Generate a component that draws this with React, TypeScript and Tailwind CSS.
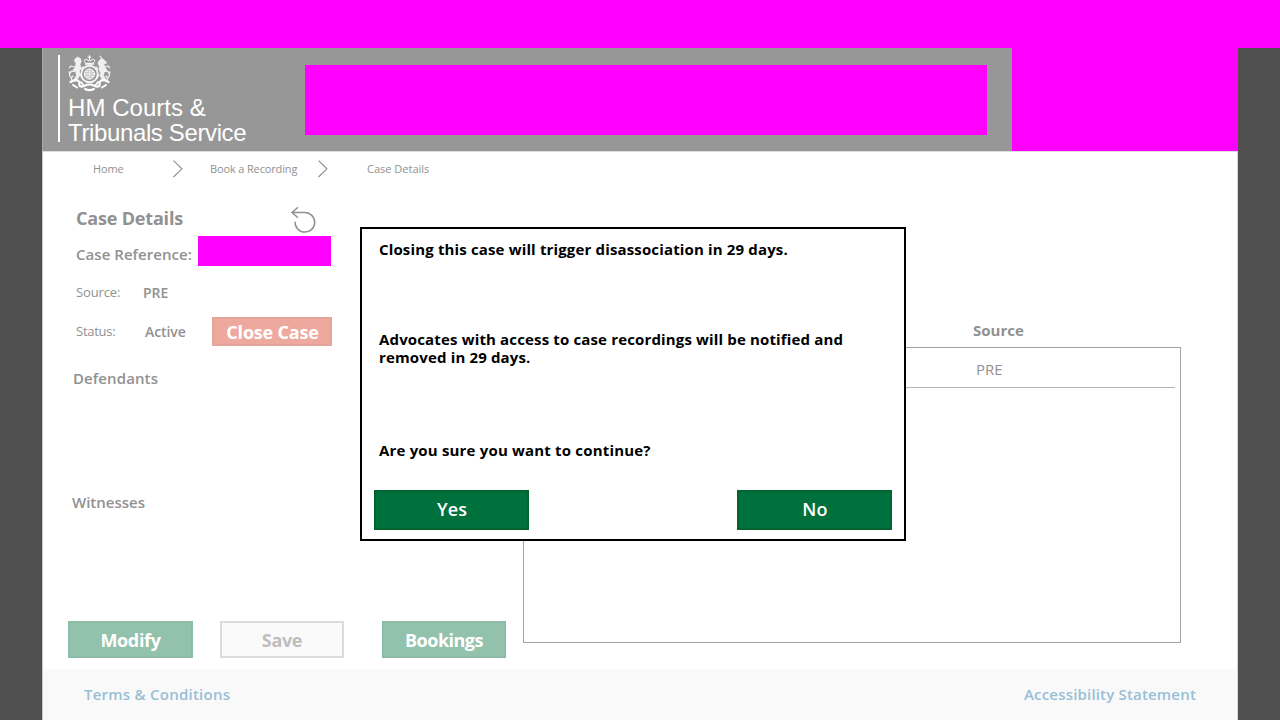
import type { ReactNode } from "react";

function Crest() {
  return (
    <svg width="44" height="38" viewBox="0 0 44 38" fill="none" stroke="white" strokeLinecap="round" strokeLinejoin="round">
      <path d="M17.500 8c-2-2-1.500-4 1-3.500l3 1.500 3-1.500c2.500-.5 3 1.500 1 3.500zM21.500 4.500V.6M20 2.200h3" strokeWidth="1" />
      <path d="M17.500 9h8" strokeWidth="1.400" />
      <circle cx="21.500" cy="19" r="8.300" strokeWidth="1.900" strokeOpacity=".9" />
      <circle cx="21.500" cy="19" r="5.200" strokeWidth="0.800" fill="white" fillOpacity="0.5" />
      <path d="M21.500 14v10M16.500 19h10M18 16.500h2M23.500 16.500h2M18 21.500h2M23.500 21.500h2" strokeWidth="0.800" strokeOpacity=".8" />
      <path d="M7 4l2.500-2 3 1.500.8 3-1.300 3 1 3-1.500 4 .5 3.500-2 3.500-4 3 .5-3 2-3-1-4-2.500-1.500 2-2.500L8 8.500 6.500 6z" fill="white" fillOpacity=".85" strokeWidth=".7" strokeOpacity=".7" />
      <path d="M6.500 12L3 11 1.500 12.500M6.500 16l-3.500.5-1.500 1.500M5 21l-2 2 1 2M3 22.500c-3-2-1-5 .5-6M2 19l-1-2M13 14l2-2M12 20l2 2" strokeWidth="1.300" strokeOpacity=".85" />
      <path d="M36 5L31.500.8 33.500 4 31 5.500l-1 3 1.500 3-.5 3 1.500 3.500-.5 3 2 3 4 2.500-.5-3-2-3 1-4 2.500-1.500-2-2.500-1.500-4 2 .5 1-1.500z" fill="white" fillOpacity=".85" strokeWidth=".7" strokeOpacity=".7" />
      <path d="M36.500 12l3.500-1 1.500 1.500M36.500 16l3.500.5 1.500 1.500M38 21l2 2-1 2M40 22.500c3-2 1-5-.5-6M41 19l1-2M30 14l-2-2M31 20l-2 2" strokeWidth="1.300" strokeOpacity=".85" />
      <path d="M2.500 27c3-2 6-2.500 8-1 2.500 2-1 5 2.500 5.500 3 .5 4-2 8.500-2s5.500 2.500 8.500 2c3.500-.5 0-3.500 2.500-5.500 2-1.500 5-1 8 1" strokeWidth="2.200" />
      <path d="M5 30l4 2.500M38 30l-4 2.500M13 27l2 2.500M30 27l-2 2.500M17 34c3 1.500 6 1.500 9 0" strokeWidth="2" />
    </svg>
  );
}

function Chevron() {
  return (
    <svg className="-mt-[2px]" width="12" height="18" viewBox="0 0 12 18" fill="none" stroke="#8c8c8c" strokeWidth="1.100">
      <path d="M1.500 0.700L9.900 8.800L1.500 17" />
    </svg>
  );
}

function UndoIcon() {
  return (
    <svg className="mt-[3px]" width="28" height="28" viewBox="0 0 28 28" fill="none" stroke="#8f8f8f" strokeWidth="1.500">
      <path d="M2 6.500H14.800A9.800 9.800 0 1 1 5.100 15.800M8 1.200L2 6.500L8 11.700" />
    </svg>
  );
}

function DialogButton({ children }: { children: ReactNode }) {
  return (
    <button className="flex h-10 w-[155px] items-center justify-center border-2 border-[#00652f] bg-[#00703c] pb-[2px] pl-px text-[18px] font-semibold text-white">
      {children}
    </button>
  );
}

export default function App() {
  return (
    <div className="relative flex h-[720px] w-[1280px] flex-col overflow-hidden bg-[#505050] font-['Open_Sans',sans-serif] text-[#919191]">
      <div className="h-12 shrink-0 bg-[#ff00ff]" />
      <div className="mx-[42px] flex flex-1 flex-col bg-white">
        <header className="flex h-[103px] bg-[#979797]">
          <div className="flex w-[263px] border-l border-[#a9a9a9] pl-[15px] pt-[7px]">
            <div className="h-[87px] w-[2px] bg-white" />
            <div className="pl-[8px] font-['Liberation_Sans',sans-serif] text-[24px] leading-[25px] text-white">
              <Crest />
              <div className="mt-[2px] whitespace-nowrap tracking-[0.05px]">HM Courts &amp;</div>
              <div className="whitespace-nowrap tracking-[-0.37px]">Tribunals Service</div>
            </div>
          </div>
          <div className="mt-[17px] h-[70px] w-[682px] bg-[#ff00ff]" />
          <div className="ml-auto h-full w-[226px] bg-[#ff00ff]" />
        </header>

        <div className="flex flex-1 flex-col border-x border-l-[#c9c9c9] border-r-[#d6d6d6]">
          <nav className="flex h-9 items-center border-t border-[#dedede] pl-[50px] text-[11px] font-medium">
            <span className="w-[79px] tracking-[-0.1px]">Home</span>
            <Chevron />
            <span className="ml-[26px] w-[107px] whitespace-nowrap tracking-[-0.14px]">Book a Recording</span>
            <Chevron />
            <span className="ml-[38px]">Case Details</span>
          </nav>

          <div className="flex h-[482px]">
            <section className="flex w-[480px] flex-col">
              <div className="mt-[13px] flex h-9 items-center pl-[33px]">
                <h1 className="w-[214px] text-[18px] font-bold tracking-[-0.18px]">Case Details</h1>
                <UndoIcon />
              </div>
              <div className="flex h-[30px] pl-[33px]">
                <span className="w-[122px] pt-[7px] text-[15px] font-semibold leading-[22px] tracking-[0.05px] whitespace-nowrap">Case Reference:</span>
                <span className="h-full w-[133px] bg-[#ff00ff]" />
              </div>
              <div className="mt-[13px] flex h-7 items-center pl-[33px]">
                <span className="w-[67px] text-[13px] tracking-[-0.12px]">Source:</span>
                <span className="pb-px text-[14px] font-semibold">PRE</span>
              </div>
              <div className="mt-[10px] flex h-[29px] items-center pl-[33px]">
                <span className="w-[69px] pt-px text-[13px] tracking-[-0.25px]">Status:</span>
                <span className="w-[67px] text-[14px] font-semibold tracking-[-0.1px]">Active</span>
                <button className="flex h-[29px] w-[120px] items-center justify-center border-2 border-[#e3a49b] bg-[#eea99f] pt-[2px] pl-px text-[18px] font-bold tracking-[-0.2px] text-white">
                  Close Case
                </button>
              </div>
              <h2 className="mt-[21px] h-[22px] pl-[30px] text-[15px] font-semibold leading-[22px] tracking-[0.1px]">Defendants</h2>
              <h2 className="mt-[102px] h-[22px] pl-[29px] text-[15px] font-semibold leading-[22px]">Witnesses</h2>
              <div className="mt-[108px] flex pl-[25px] text-[18px] font-bold tracking-[-0.35px] text-white">
                <button className="h-[37px] w-[125px] border-2 border-[#8dbca6] bg-[#93c2ac] pt-[2px]">Modify</button>
                <button className="ml-[27px] h-[37px] w-[124px] border-2 border-[#dcdcdc] bg-[#fafafa] pt-[2px] text-[#bebebe]">Save</button>
                <button className="ml-[38px] h-[37px] w-[124px] border-2 border-[#8dbca6] bg-[#93c2ac] pt-[2px] tracking-[-0.5px]">Bookings</button>
              </div>
            </section>
            <section className="w-[658px] pt-[132px]">
              <h2 className="h-[28px] pl-[450px] text-[15px] font-bold leading-[22px]">Source</h2>
              <div className="h-[296px] border border-[#a3a3a3] pr-[5px]">
                <div className="h-10 border-b border-[#b5b5b5] pl-[452px] text-[15px] leading-[43px]">PRE</div>
              </div>
            </section>
          </div>

          <footer className="flex flex-1 items-center justify-between bg-[#f9f9f9] px-[41px] text-[15px] font-semibold text-[#98bfd8]">
            <a className="tracking-[0.24px]">Terms &amp; Conditions</a>
            <a className="tracking-[0.18px]">Accessibility Statement</a>
          </footer>
        </div>
      </div>

      <div role="dialog" className="absolute left-[360px] top-[227px] flex h-[314px] w-[546px] flex-col border-2 border-black bg-white text-[15px] font-bold leading-[18px] tracking-[0.15px] text-black">
        <p className="mt-[11px] ml-[17px]">Closing this case will trigger disassociation in 29 days.</p>
        <p className="mt-[72px] ml-[17px] w-[490px]">Advocates with access to case recordings will be notified and removed in 29 days.</p>
        <p className="mt-[75px] ml-[17px] tracking-[0.18px]">Are you sure you want to continue?</p>
        <div className="mt-[31px] flex justify-between px-3">
          <DialogButton>Yes</DialogButton>
          <DialogButton>No</DialogButton>
        </div>
      </div>
    </div>
  );
}
